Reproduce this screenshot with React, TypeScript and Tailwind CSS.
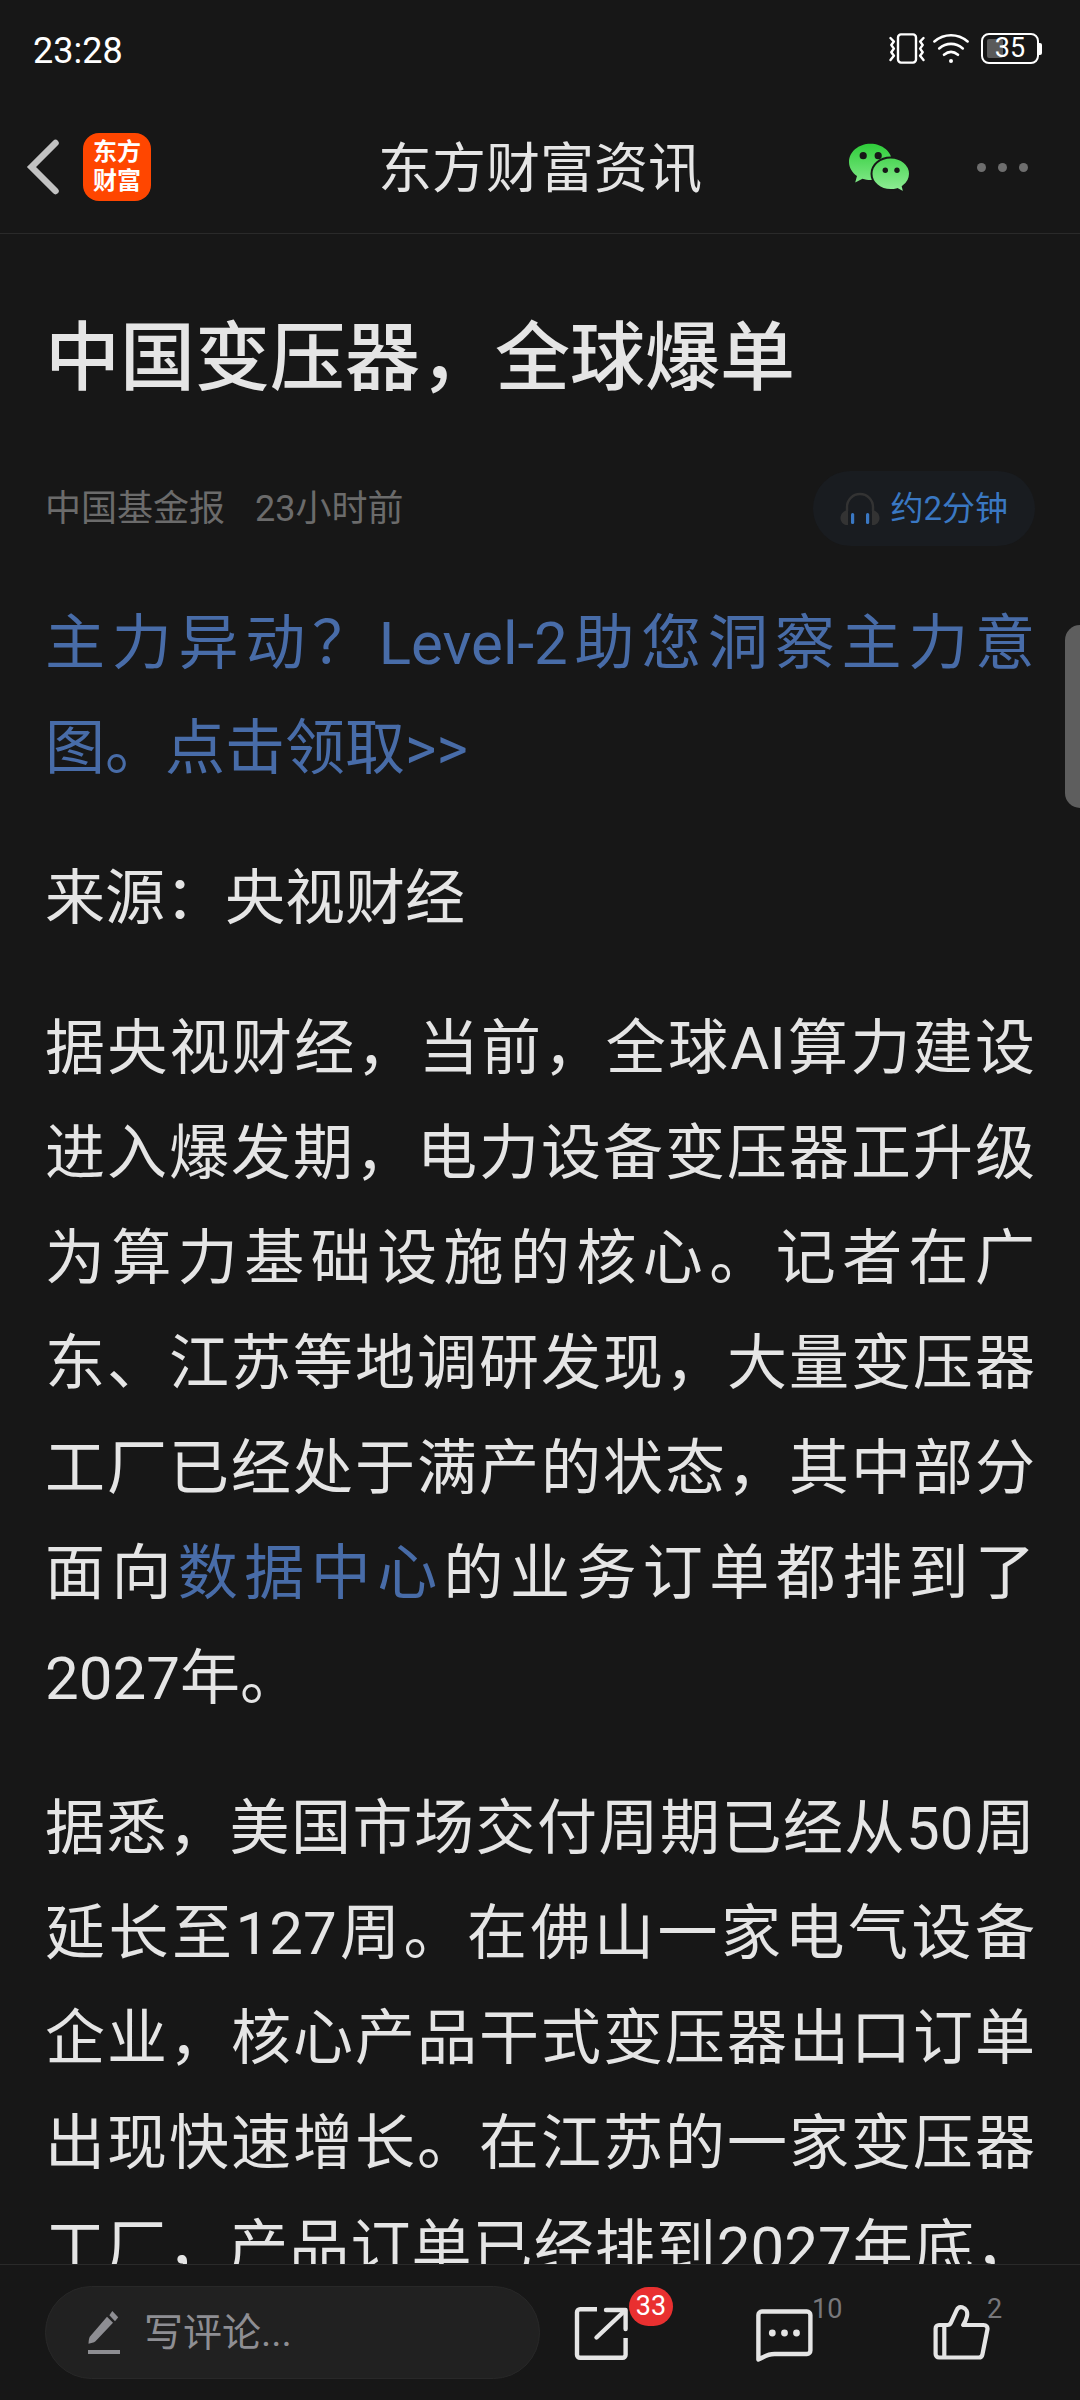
import { useState } from "react";

const paragraphs = {
    source: "来源：央视财经",
    orders: "据悉，美国市场交付周期已经从50周延长至127周。在佛山一家电气设备企业，核心产品干式变压器出口订单出现快速增长。在江苏的一家变压器工厂，产品订单已经排到2027年底，",
};

const battery = 35;

function VibrateIcon() {
    return (
        <svg viewBox="0 0 36 31" className="h-[31px] w-9" fill="none" stroke="currentColor" strokeWidth="2.4" strokeLinecap="round" strokeLinejoin="round">
            <rect x="9" y="1.4" width="18" height="28.2" rx="3" />
            <path d="M1.5 5l3.4 3.6-2.6 3.4 2.6 3.6-2.6 3.6 2.6 3.6L1.5 27" />
            <path d="M34.5 5l-3.4 3.6 2.6 3.4-2.6 3.6 2.6 3.6-2.6 3.6 3.4 4.2" />
        </svg>
    );
}

function WifiIcon() {
    return (
        <svg viewBox="0 0 36 31" className="h-[31px] w-9" fill="none" stroke="currentColor" strokeWidth="2.6" strokeLinecap="round">
            <path d="M1.4 8.4C11.5.2 24.5.2 34.6 8.4" />
            <path d="M6.2 15.4c7.2-6 16.4-6 23.6 0" />
            <path d="M11 21.8c4.4-3.6 9.6-3.6 14 0" />
            <circle cx="18" cy="28" r="2" fill="currentColor" stroke="none" />
        </svg>
    );
}

function WechatIcon() {
    return (
        <svg viewBox="0 0 60 49" className="h-[49px] w-[60px]">
            <defs>
                <linearGradient id="wechat" x1="0" y1="0" x2="0" y2="49" gradientUnits="userSpaceOnUse">
                    <stop offset="0" stopColor="#2dcc38" />
                    <stop offset="1" stopColor="#92ee98" />
                </linearGradient>
            </defs>
            <path
                fill="url(#wechat)"
                d="M21.5 .7C9.6 .7 0 8.8 0 18.9c0 5.7 3.1 10.6 8 14L6.2 39.6l7.3-3.9c2.7 .9 5.7 1.5 9 1.4C33 37 43 29 43 18.9 43 8.8 33.4 .7 21.5 .7z"
            />
            <path
                fill="url(#wechat)"
                stroke="#171717"
                strokeWidth="2"
                d="M41.7 14.5c-10.7 0-19.2 7.2-19.2 16.3s8.5 16.3 19.2 16.3c2.3 0 4.6-.4 6.7-1l7 3.8-1.6-6.3C58.2 40.6 61 36 61 30.8c0-9.1-8.6-16.3-19.3-16.3z"
            />
            <g fill="#171717">
                <circle cx="14.2" cy="12.7" r="3.6" />
                <circle cx="29.2" cy="12.7" r="3.6" />
                <circle cx="36.3" cy="27.3" r="2.7" />
                <circle cx="48" cy="27.3" r="2.7" />
            </g>
        </svg>
    );
}

function HeadphoneIcon() {
    return (
        <svg viewBox="0 0 40 34" className="h-[34px] w-10">
            <path d="M7 19v-4a13 13 0 0 1 26 0v4" fill="none" stroke="#333333" strokeWidth="2.4" />
            <path d="M8 18v15C3.5 33.5 .5 30 .5 26S3.5 18.5 8 18z" fill="#333333" />
            <path d="M32 18v15c4.5 .5 7.5-3 7.5-7s-3-7.5-7.5-8z" fill="#333333" />
            <rect x="11" y="21" width="3.2" height="11" rx="1.5" fill="#3a78c3" />
            <rect x="26" y="21" width="3.2" height="11" rx="1.5" fill="#3a78c3" />
        </svg>
    );
}

function PencilIcon() {
    return (
        <svg viewBox="0 0 32 43" className="h-[43px] w-8 shrink-0" fill="#8e8e93">
            <path d="M19 5.7l6 6L7.5 30.3c-1.6 1.4-4.4 2-7 2.5.2-2.6.3-5.2 1.3-7z" />
            <path d="M24.3 0l5.9 6.2-3.2 4-5.6-6z" />
            <rect y="39" width="32" height="4" />
        </svg>
    );
}

function ShareIcon() {
    return (
        <svg viewBox="0 0 56 56" className="size-14" fill="none" stroke="currentColor" strokeWidth="4.4" strokeLinejoin="round">
            <path d="M24 4.2H7a3 3 0 0 0-3 3v42.6a3 3 0 0 0 3 3h42.6a3 3 0 0 0 3-3V33" />
            <path d="M33 5h19.6v19" strokeLinecap="round" />
            <path d="M23.5 32.5L51.5 6" strokeLinecap="round" />
        </svg>
    );
}

function CommentIcon() {
    return (
        <svg viewBox="0 0 58 58" className="h-[58px] w-[58px]" fill="none" stroke="currentColor" strokeWidth="4.4" strokeLinejoin="round">
            <path d="M2.4 55.5V11a3.500 3.500 0 0 1 3.500-3.500h45a3.500 3.500 0 0 1 3.500 3.500v35.500a3.500 3.500 0 0 1-3.500 3.500H18.500C10.500 50 7 53.800 2.400 55.500z" />
            <g fill="currentColor" stroke="none">
                <circle cx="16.3" cy="29" r="3.4" />
                <circle cx="28.5" cy="29" r="3.4" />
                <circle cx="40.5" cy="29" r="3.4" />
            </g>
        </svg>
    );
}

function ThumbIcon() {
    return (
        <svg viewBox="0 0 58 58" className="h-[58px] w-[58px]" fill="none" stroke="currentColor" strokeWidth="4.2" strokeLinejoin="round">
            <path d="M6 21h8.5c2 0 2.9-1 3.6-2.6l5.6-12.2c1-2.6 3-3.6 5.6-2.9 4 1.1 5.6 5 4.6 9.3-.7 3.2-2 5.8-3.7 8.4h20.3c2.900 0 4.400 1.900 3.900 4.500l-5 25c-.4 2-1.6 3-3.600 3H6a3.400 3.400 0 0 1-3.400-3.400V24.400A3.400 3.400 0 0 1 6 21z" />
            <path d="M11.3 21v32.5" />
        </svg>
    );
}

function StatusBar() {
    return (
        <div className="flex h-[101px] items-center justify-between pr-[38px] pb-1 pl-[33px] text-white">
            <span className="pt-1 text-[36px] leading-none">23:28</span>
            <div className="flex items-center gap-2">
                <VibrateIcon />
                <WifiIcon />
                <div className="ml-1 flex items-center">
                    <div className="relative flex h-[31px] w-[58px] items-center justify-center rounded-lg border-2 border-white">
                        <div className="absolute inset-1">
                            <div className="h-full rounded-xs bg-[#5a5a5a]" style={{ width: `${battery}%` }} />
                        </div>
                        <span className="relative text-[27px] leading-none">{battery}</span>
                    </div>
                    <div className="h-3 w-[3px] rounded-r-xs bg-white" />
                </div>
            </div>
        </div>
    );
}

function NavBar() {
    return (
        <header className="grid h-[133px] shrink-0 grid-cols-[1fr_auto_1fr] items-center border-b border-[#2a2a2a] px-[26px]">
            <div className="flex items-center gap-[23px]">
                <button type="button" aria-label="返回" className="cursor-pointer">
                    <svg viewBox="0 0 34 56" className="h-14 w-[34px]" fill="none" stroke="#c2c2c2" strokeWidth="6.5" strokeLinecap="round" strokeLinejoin="miter">
                        <path d="M29.5 4L5.500 28l24 24" />
                    </svg>
                </button>
                <a href="#home" className="flex size-[68px] items-center justify-center rounded-2xl bg-[#ff4600] text-center text-2xl leading-[29px] font-bold text-white">
                    <span>
                        东方
                        <br />
                        财富
                    </span>
                </a>
            </div>
            <h2 className="pt-1.5 text-[54px] leading-none text-[#e5e5e5]">东方财富资讯</h2>
            <div className="flex items-center justify-end gap-[68px] pr-[26px]">
                <button type="button" aria-label="微信分享" className="cursor-pointer">
                    <WechatIcon />
                </button>
                <button type="button" aria-label="更多" className="flex cursor-pointer gap-3">
                    <span className="size-[9px] rounded-full bg-[#6e6e6e]" />
                    <span className="size-[9px] rounded-full bg-[#6e6e6e]" />
                    <span className="size-[9px] rounded-full bg-[#6e6e6e]" />
                </button>
            </div>
        </header>
    );
}

function CommentBar() {
    const [comment, setComment] = useState("");

    return (
        <footer className="grid h-[136px] shrink-0 grid-cols-[11fr_4fr_4fr_4fr] items-center border-t border-[#2a2a2a] pl-[45px] text-[#e5e5e5]">
            <label className="flex h-[93px] items-center gap-6 rounded-full border border-[#282828] bg-[#212121] px-[42px]">
                <PencilIcon />
                <input
                    type="text"
                    aria-label="写评论"
                    value={comment}
                    onChange={(e) => setComment(e.target.value)}
                    placeholder="写评论..."
                    className="w-full min-w-0 bg-transparent text-[39px] leading-[60px] outline-none placeholder:text-[#8e8e93]"
                />
            </label>
            <button type="button" aria-label="分享" className="relative ml-[33px] w-14 cursor-pointer">
                <ShareIcon />
                <span className="absolute -top-[18px] left-full flex h-[39px] w-11 items-center justify-center rounded-full bg-[#e93030] text-[27px] leading-none text-white">
                    33
                </span>
            </button>
            <button type="button" aria-label="评论" className="relative ml-9 w-14 cursor-pointer">
                <CommentIcon />
                <span className="absolute -top-2 left-full text-[27px] leading-none text-[#77777b]">10</span>
            </button>
            <button type="button" aria-label="点赞" className="relative ml-[33px] w-[54px] cursor-pointer">
                <ThumbIcon />
                <span className="absolute -top-2 left-full text-[27px] leading-none text-[#77777b]">2</span>
            </button>
        </footer>
    );
}

export default function App() {
    return (
        <div
            lang="zh-CN"
            className="flex h-screen flex-col overflow-hidden bg-[#171717] font-['Roboto','Noto_Sans_CJK_SC',sans-serif]"
        >
            <StatusBar />
            <NavBar />

            <main className="min-h-0 flex-1 overflow-y-auto px-[45px] pt-[72px] text-[#e5e5e5] [scrollbar-width:none]">
                <h1 className="text-[75px] leading-[105px] font-medium">中国变压器，全球爆单</h1>

                <div className="mt-[60px] flex items-center justify-between">
                    <div className="flex gap-[30px] text-[36px] leading-[54px] text-[#6b6b6b]">
                        <span>中国基金报</span>
                        <span>23小时前</span>
                    </div>
                    <button
                        type="button"
                        className="flex h-[75px] cursor-pointer items-center gap-[10px] rounded-full bg-[#191c20] px-[27px] text-[33px] leading-none text-[#3a78c3]"
                    >
                        <HeadphoneIcon />
                        约2分钟
                    </button>
                </div>

                <article className="mt-[45px] space-y-[45px] text-justify text-[60px] leading-[105px]">
                    <p>
                        <a href="#level2" className="text-[#486ca8]">
                            主力异动？Level-2助您洞察主力意图。点击领取&gt;&gt;
                        </a>
                    </p>
                    <p>{paragraphs.source}</p>
                    <p>
                        据央视财经，当前，全球AI算力建设进入爆发期，电力设备变压器正升级为算力基础设施的核心。记者在广东、江苏等地调研发现，大量变压器工厂已经处于满产的状态，其中部分面向
                        <a href="#datacenter" className="text-[#486ca8]">数据中心</a>
                        的业务订单都排到了2027年。
                    </p>
                    <p className="[text-align-last:justify]">{paragraphs.orders}</p>
                </article>
            </main>

            <CommentBar />

            <div className="fixed top-[625px] right-0 h-[183px] w-[15px] rounded-l-2xl bg-[#5e5e5e]" />
        </div>
    );
}
